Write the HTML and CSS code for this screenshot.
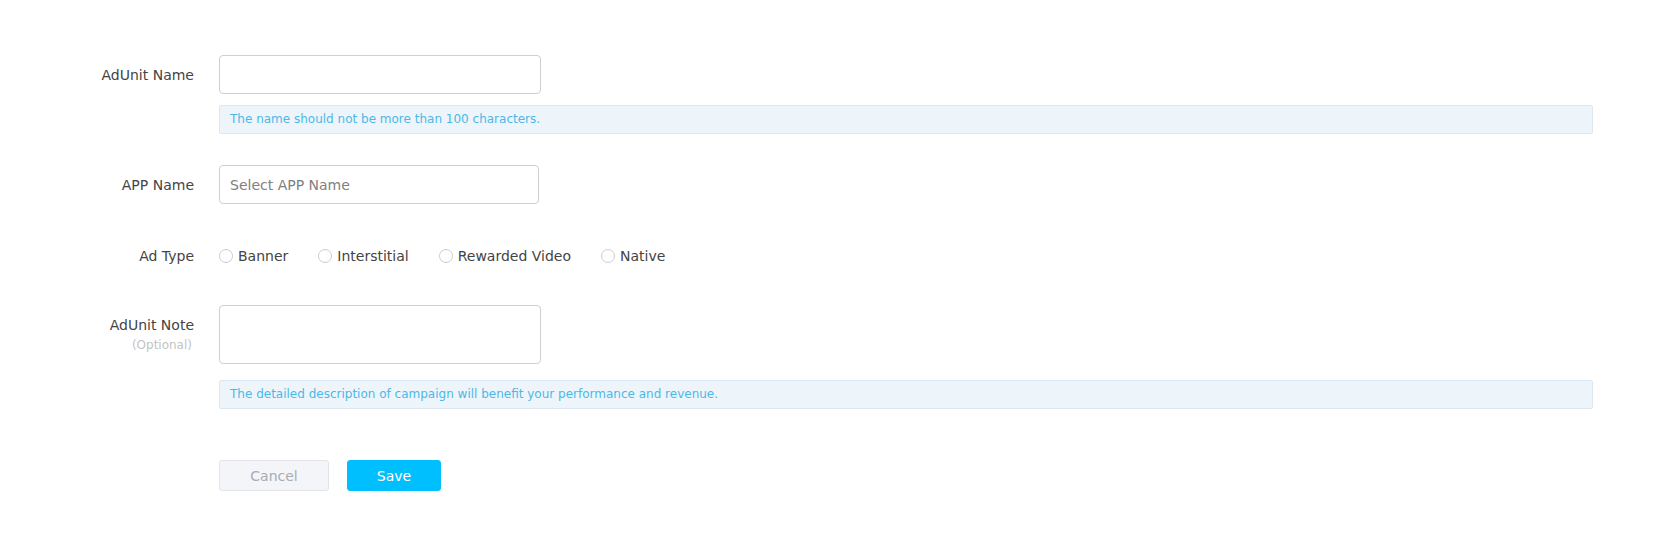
FILE: index.html
```html
<!DOCTYPE html>
<html lang="en">
<head>
<meta charset="utf-8">
<title>AdUnit</title>
<link rel="stylesheet" href="styles.css">
</head>
<body>
<form class="form">
  <div class="row">
    <label class="label">AdUnit Name</label>
    <div class="field">
      <input class="input" type="text">
      <div class="hint">The name should not be more than 100 characters.</div>
    </div>
  </div>
  <div class="row row-app">
    <label class="label">APP Name</label>
    <div class="field">
      <input class="input input-app" type="text" placeholder="Select APP Name">
    </div>
  </div>
  <div class="row row-type">
    <label class="label label-inline">Ad Type</label>
    <div class="field radios">
      <span class="radio"><span class="dot"></span>Banner</span>
      <span class="radio"><span class="dot"></span>Interstitial</span>
      <span class="radio"><span class="dot"></span>Rewarded Video</span>
      <span class="radio"><span class="dot"></span>Native</span>
    </div>
  </div>
  <div class="row row-note">
    <label class="label">AdUnit Note<span class="optional">(Optional)</span></label>
    <div class="field">
      <textarea class="textarea"></textarea>
      <div class="hint hint-note">The detailed description of campaign will benefit your performance and revenue.</div>
    </div>
  </div>
  <div class="row row-actions">
    <span class="label"></span>
    <div class="field actions">
      <button type="button" class="btn btn-cancel">Cancel</button>
      <button type="button" class="btn btn-save">Save</button>
    </div>
  </div>
</form>
</body>
</html>
```
FILE: styles.css
```css
* { box-sizing: border-box; }
html, body { margin: 0; padding: 0; background: #fff; }
body {
  font-family: "DejaVu Sans", "Noto Sans", sans-serif;
  font-size: 14px;
  color: #444;
}
.form {
  padding: 55px 0 0 0;
  width: 1593px;
}
.row {
  display: grid;
  grid-template-columns: 194px 1fr;
  column-gap: 25px;
}
.label {
  text-align: right;
  font-size: 14px;
  line-height: 20px;
  padding-top: 10px;
  color: #444;
  display: flex;
  flex-direction: column;
  align-items: flex-end;
}
.optional {
  font-size: 12px;
  line-height: 16px;
  color: #c4c4c4;
  margin-top: 2px;
  margin-right: 2px;
}
.field { min-width: 0; }
.input {
  display: block;
  width: 322px;
  height: 39px;
  border: 1px solid #cfcfcf;
  border-radius: 4px;
  padding: 0 10px;
  font-family: inherit;
  font-size: 14px;
  color: #333;
  outline: none;
}
.input-app { width: 320px; }
.input::placeholder { color: #808080; }
.textarea {
  display: block;
  width: 322px;
  height: 59px;
  border: 1px solid #cfcfcf;
  border-radius: 4px;
  resize: none;
  outline: none;
  font-family: inherit;
}
.hint {
  margin-top: 11px;
  height: 29px;
  background: #edf5fb;
  border: 1px solid #dbe8f2;
  border-radius: 2px;
  color: #4cb8e8;
  font-size: 12px;
  line-height: 27px;
  padding-left: 10px;
}
.hint-note { margin-top: 16px; }
.row-app { margin-top: 31px; }
.row-type { margin-top: 42px; }
.label-inline { padding-top: 0; }
.radios {
  display: flex;
  align-items: center;
  height: 20px;
}
.radio {
  display: inline-flex;
  align-items: center;
  font-size: 14px;
  color: #444;
  margin-right: 30px;
}
.dot {
  width: 14px;
  height: 14px;
  border: 1px solid #cdcdcd;
  border-radius: 50%;
  margin-right: 5px;
  background: #fff;
}
.row-note { margin-top: 39px; }
.row-note .label { padding-top: 10px; }
.row-actions { margin-top: 51px; }
.actions { display: flex; gap: 18px; }
.btn {
  height: 31px;
  border-radius: 3px;
  font-family: inherit;
  font-size: 14px;
  padding: 0;
  cursor: pointer;
}
.btn-cancel {
  width: 110px;
  background: #f4f5f9;
  border: 1px solid #e2e4e9;
  color: #a9acb2;
}
.btn-save {
  width: 94px;
  background: #00bfff;
  border: 1px solid #00bfff;
  color: #fff;
}
```
